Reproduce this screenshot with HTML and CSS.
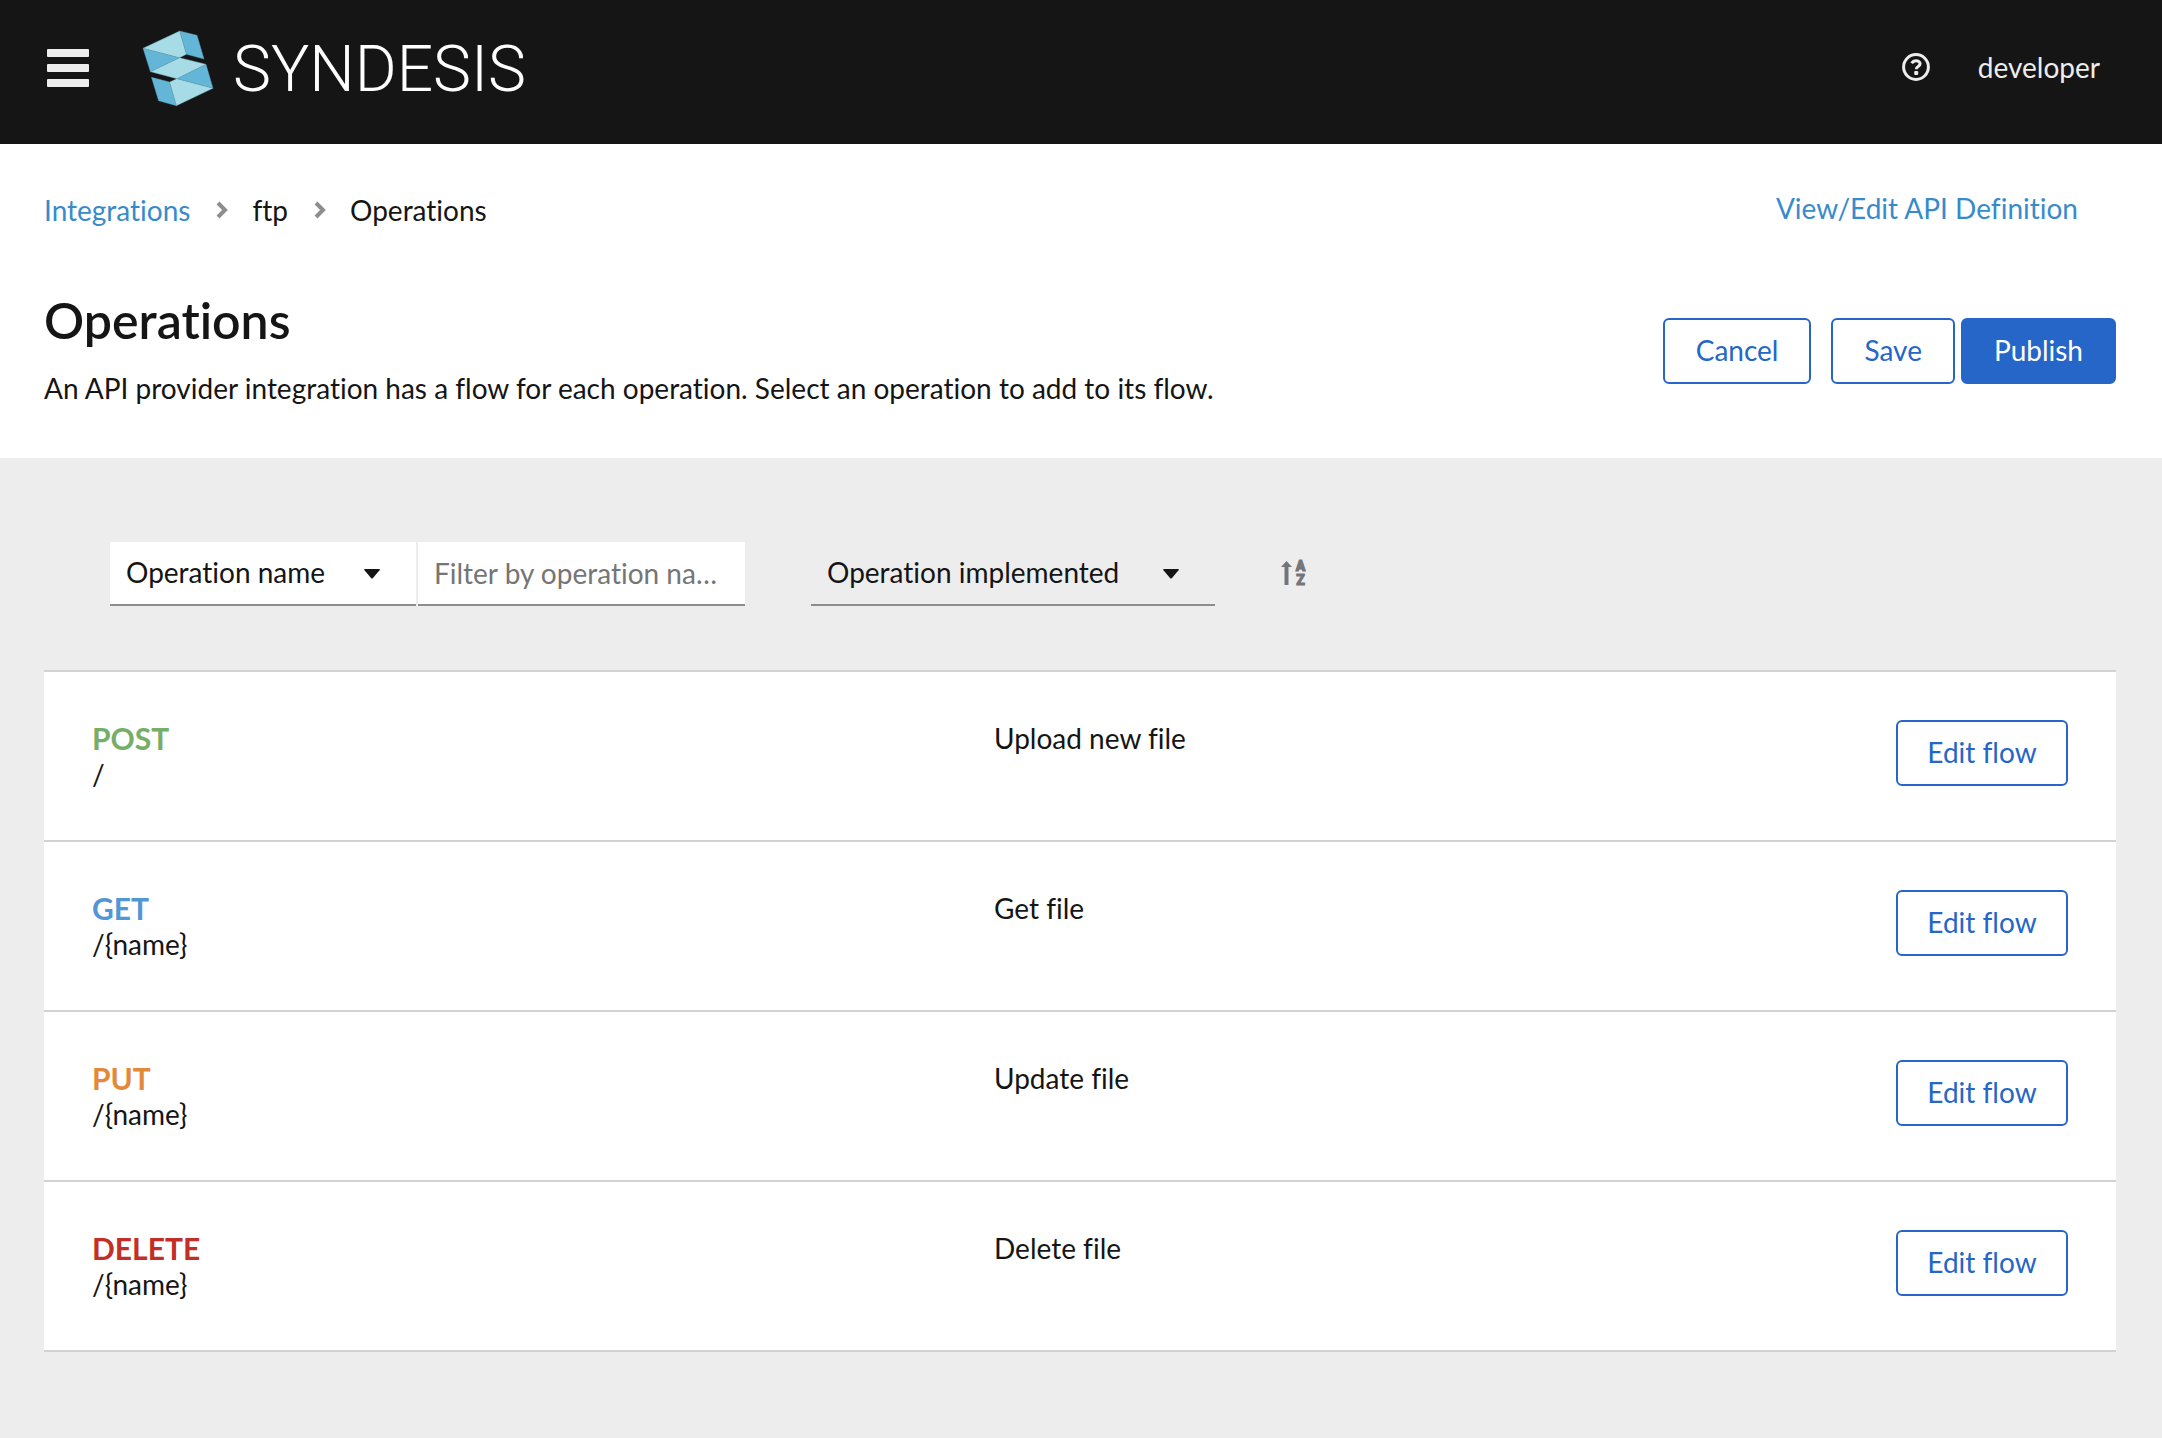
FILE: index.html
```html
<!DOCTYPE html>
<html lang="en">
<head>
<meta charset="utf-8">
<title>Syndesis - Operations</title>
<link rel="stylesheet" href="styles.css">
</head>
<body>
<header class="masthead">
  <button class="icon-button" type="button" aria-label="Toggle navigation">
    <svg class="menu-icon" viewBox="0 0 42 38" width="42" height="38"><g fill="#ededed"><rect width="42" height="8" rx="1"/><rect y="15" width="42" height="8" rx="1"/><rect y="30" width="42" height="8" rx="1"/></g></svg>
  </button>
  <a class="brand" href="#">
    <svg class="brand-mark" viewBox="0 0 70 75" width="70" height="75" aria-hidden="true">
      <g stroke="#5c9fb4" stroke-width=".4">
        <g fill="#64b6d8">
          <path d="M36.600 0 54 4.300 61 28 43.400 23.300z"/>
          <path d="M0 17.300 36.600 26.700 7.400 40.700z"/>
          <path d="M63 33.300 70 57.300 33.800 47.700z"/>
          <path d="M8.400 46.300 26.600 51 33.400 74.700 15.600 69.700z"/>
        </g>
        <g fill="#a7dce6">
          <path d="M0 17.300 36.600 0 43.400 23.300 36.600 26.700z"/>
          <path d="M36.600 26.700 63 33.300 33.800 47.700 7.400 40.700z"/>
          <path d="M26.600 51 33.800 47.700 70 57.300 33.400 74.700z"/>
        </g>
      </g>
    </svg>
    <span class="brand-name">SYNDESIS</span>
  </a>
  <div class="masthead-tools">
    <button class="icon-button" type="button" aria-label="Help">
      <svg viewBox="0 0 28 28" width="28" height="28"><circle cx="14" cy="14" r="12.400" fill="none" stroke="#ededed" stroke-width="3"/><path d="M9.700 10.300C10.700 8.500 12.200 7.700 14.100 7.700c2.300 0 4 1.300 4 3.100 0 2.700-3.700 2.500-3.700 4.900v.6" fill="none" stroke="#ededed" stroke-width="3"/><rect x="12.200" y="18" width="4" height="4" rx="1" fill="#ededed"/></svg>
    </button>
    <button class="user-button" type="button">developer</button>
  </div>
</header>
<main>
  <section class="page-head">
    <div class="crumb-row">
      <nav aria-label="Breadcrumb">
        <ol class="crumbs">
          <li><a class="link" href="#">Integrations</a></li>
          <li><svg viewBox="0 0 12 18" width="12" height="18" aria-hidden="true"><path d="M2 2 9 9 2 16" fill="none" stroke="#8b8d8f" stroke-width="4"/></svg>ftp</li>
          <li><svg viewBox="0 0 12 18" width="12" height="18" aria-hidden="true"><path d="M2 2 9 9 2 16" fill="none" stroke="#8b8d8f" stroke-width="4"/></svg>Operations</li>
        </ol>
      </nav>
      <a class="link api-link" href="#">View/Edit API Definition</a>
    </div>
    <div class="title-row">
      <div>
        <h1>Operations</h1>
        <p>An API provider integration has a flow for each operation. Select an operation to add to its flow.</p>
      </div>
      <div class="actions">
        <button class="btn btn-cancel" type="button">Cancel</button>
        <button class="btn" type="button">Save</button>
        <button class="btn btn-primary" type="button">Publish</button>
      </div>
    </div>
  </section>
  <section class="content">
    <form class="toolbar">
      <div class="select select-name">
        <select aria-label="Filter field"><option>Operation name</option></select>
        <svg viewBox="0 0 16 10" width="16" height="10" aria-hidden="true"><path d="M1 0h14q1.500 0 .5 1.200L9 9q-1 1-2 0L.5 1.200Q-.5 0 1 0z" fill="#151515"/></svg>
      </div>
      <input class="filter" type="text" aria-label="Filter by operation name" placeholder="Filter by operation name...">
      <div class="select select-sort">
        <select aria-label="Sort by"><option>Operation implemented</option></select>
        <svg viewBox="0 0 16 10" width="16" height="10" aria-hidden="true"><path d="M1 0h14q1.500 0 .5 1.200L9 9q-1 1-2 0L.5 1.200Q-.5 0 1 0z" fill="#151515"/></svg>
      </div>
      <button class="icon-button" type="button" aria-label="Sort ascending">
        <svg class="sort-icon" viewBox="0 0 26 28" width="26" height="28"><path d="M5.500 1 11 7H7.500V25h-4V7H0z" fill="#72767b"/><text x="19.500" y="11" text-anchor="middle">A</text><text x="19.500" y="25" text-anchor="middle">Z</text></svg>
      </button>
    </form>
    <ul class="operations">
      <li class="operation">
        <div><strong class="method post">POST</strong><div>/</div></div>
        <div>Upload new file</div>
        <button class="btn" type="button">Edit flow</button>
      </li>
      <li class="operation">
        <div><strong class="method get">GET</strong><div>/{name}</div></div>
        <div>Get file</div>
        <button class="btn" type="button">Edit flow</button>
      </li>
      <li class="operation">
        <div><strong class="method put">PUT</strong><div>/{name}</div></div>
        <div>Update file</div>
        <button class="btn" type="button">Edit flow</button>
      </li>
      <li class="operation">
        <div><strong class="method delete">DELETE</strong><div>/{name}</div></div>
        <div>Delete file</div>
        <button class="btn" type="button">Edit flow</button>
      </li>
    </ul>
  </section>
</main>
</body>
</html>
```
FILE: styles.css
```css
* { box-sizing: border-box; }
body {
  margin: 0;
  min-height: 100vh;
  background: #ededed;
  color: #151515;
  font: 28px/36px Lato, "Open Sans", sans-serif;
  font-variant-ligatures: none;
}
h1, p, ol, ul { margin: 0; padding: 0; }
ol, ul { list-style: none; }
button, input, select { font: inherit; font-variant-ligatures: none; color: inherit; }
svg { display: block; flex: none; overflow: visible; }
.link { color: #388bcb; text-decoration: none; }

.masthead {
  display: flex;
  align-items: center;
  height: 144px;
  padding: 0 62px 8px 47px;
  background: #151515;
  color: #ededed;
}
.icon-button, .user-button {
  padding: 0;
  border: 0;
  background: none;
}
.brand {
  display: flex;
  align-items: center;
  gap: 20px;
  margin-left: 54px;
  color: #fff;
  text-decoration: none;
}
.brand-name {
  padding-top: 4px;
  font-family: Roboto, sans-serif;
  font-size: 64px;
  line-height: 76px;
  font-weight: 300;
}
.masthead-tools {
  display: flex;
  align-items: center;
  gap: 48px;
  margin-left: auto;
  padding-bottom: 2px;
}

.page-head { padding: 46px 46px 52px 44px; background: #fff; }
.crumb-row, .title-row { display: flex; justify-content: space-between; }
.crumbs { display: flex; gap: 26px; padding-top: 2px; }
.crumbs li { display: flex; align-items: center; gap: 24px; }
.api-link { margin-right: 38px; }
.title-row { align-items: flex-end; margin-top: 62px; }
h1 { font-size: 50px; line-height: 60px; font-weight: 600; }
.title-row p { margin-top: 20px; }
.actions { display: flex; gap: 6px; margin-bottom: 22px; }
.btn {
  padding: 12px 31px 14px;
  border: 2px solid #2566c8;
  border-radius: 6px;
  background: #fff;
  color: #2566c8;
  white-space: nowrap;
}
.btn-cancel { margin-right: 14px; }
.btn-primary { background: #2566c8; color: #fff; }

.content { padding: 84px 46px 86px 44px; }
.toolbar { display: flex; align-items: center; padding-left: 66px; }
.select { display: grid; align-items: center; }
.select > * { grid-area: 1 / 1; }
.select select, .filter {
  width: 100%;
  height: 64px;
  border: 0;
  border-bottom: 2px solid #8b8d8f;
  border-radius: 0;
  appearance: none;
  background: #fff;
}
.select select { padding: 0 16px 2px; }
.select svg { justify-self: end; margin-right: 36px; pointer-events: none; }
.select-name { width: 306px; }
.filter { width: 327px; margin-left: 2px; padding: 0 16px; text-overflow: ellipsis; }
.filter::placeholder { color: #757575; }
.select-sort { width: 404px; margin: 0 66px; }
.select-sort select { background: transparent; }
.sort-icon text { font: 900 14px Roboto, sans-serif; fill: #72767b; stroke: #72767b; }

.operations { margin-top: 64px; border-top: 2px solid #d2d2d2; }
.operation {
  display: grid;
  grid-template-columns: 1fr 1fr 172px;
  align-items: start;
  padding: 48px;
  border-bottom: 2px solid #d2d2d2;
  background: #fff;
}
.operation .btn { padding-left: 0; padding-right: 0; }
.method { display: block; font-size: 30px; font-weight: 700; }
.post { color: #76ae68; }
.get { color: #5296d3; }
.put { color: #e38939; }
.delete { color: #c32f26; }
```
